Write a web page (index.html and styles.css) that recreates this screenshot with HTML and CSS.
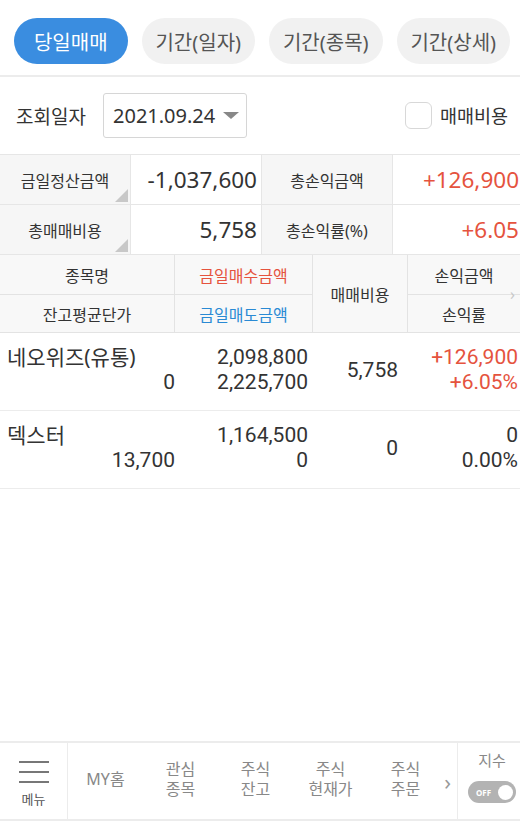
FILE: index.html
```html
<!DOCTYPE html>
<html lang="ko">
<head>
<meta charset="utf-8">
<link rel="stylesheet" href="styles.css">
</head>
<body>
<div class="page">
  <div class="tabs">
    <div class="tab active">당일매매</div>
    <div class="tab">기간(일자)</div>
    <div class="tab">기간(종목)</div>
    <div class="tab">기간(상세)</div>
  </div>

  <div class="query">
    <span class="q-label">조회일자</span>
    <div class="select"><span>2021.09.24</span><span class="caret"></span></div>
    <div class="check"><span class="box"></span><span>매매비용</span></div>
  </div>

  <div class="summary">
    <div class="s-label tri">금일정산금액</div>
    <div class="s-val">-1,037,600</div>
    <div class="s-label">총손익금액</div>
    <div class="s-val red">+126,900</div>
    <div class="s-label tri">총매매비용</div>
    <div class="s-val">5,758</div>
    <div class="s-label">총손익률(%)</div>
    <div class="s-val red">+6.05</div>
  </div>

  <div class="head">
    <div class="h c1 r1">종목명</div>
    <div class="h c2 r1 red">금일매수금액</div>
    <div class="h c3 span">매매비용</div>
    <div class="h c4 r1">손익금액</div>
    <div class="h c1 r2">잔고평균단가</div>
    <div class="h c2 r2 blue">금일매도금액</div>
    <div class="h c4 r2">손익률</div>
    <span class="more">›</span>
  </div>

  <div class="row">
    <div class="cell left"><div class="name">네오위즈(유통)</div><div class="num">0</div></div>
    <div class="cell"><div class="num">2,098,800</div><div class="num">2,225,700</div></div>
    <div class="cell mid"><div class="num">5,758</div></div>
    <div class="cell red"><div class="num">+126,900</div><div class="num">+6.05%</div></div>
  </div>
  <div class="row">
    <div class="cell left"><div class="name">덱스터</div><div class="num">13,700</div></div>
    <div class="cell"><div class="num">1,164,500</div><div class="num">0</div></div>
    <div class="cell mid"><div class="num">0</div></div>
    <div class="cell"><div class="num">0</div><div class="num">0.00%</div></div>
  </div>

  <nav class="nav">
    <div class="menu">
      <span class="bar"></span><span class="bar"></span><span class="bar"></span>
      <span class="menu-t">메뉴</span>
    </div>
    <div class="items">
      <div class="item">MY홈</div>
      <div class="item">관심<br>종목</div>
      <div class="item">주식<br>잔고</div>
      <div class="item">주식<br>현재가</div>
      <div class="item">주식<br>주문</div>
      <span class="chev">›</span>
    </div>
    <div class="index">
      <span class="idx-t">지수</span>
      <span class="toggle"><span class="off">OFF</span><span class="knob"></span></span>
    </div>
  </nav>
</div>
</body>
</html>
```

FILE: styles.css
```css
* { box-sizing: border-box; }
html, body { margin: 0; padding: 0; background: #fff; }
body {
  font-family: "Noto Sans", "Noto Sans CJK KR", sans-serif;
  color: #333;
}
.page {
  width: 520px;
  height: 823px;
  display: flex;
  flex-direction: column;
}
.tabs {
  display: flex;
  gap: 14px;
  padding: 18px 10px 11px 14px;
  border-bottom: 2px solid #ececec;
}
.tab {
  width: 114px;
  height: 46px;
  border-radius: 23px;
  background: #f1f1f1;
  color: #555;
  font-size: 20px;
  display: flex;
  align-items: center;
  justify-content: center;
}
.tab.active { background: #3a8de0; color: #fff; }

.query {
  height: 78px;
  display: flex;
  align-items: center;
  padding: 0 12px 0 16px;
  border-bottom: 1px solid #e6e6e6;
}
.q-label { font-size: 19px; width: 87px; color: #333; }
.select {
  width: 144px;
  height: 45px;
  border: 1px solid #d6d6d6;
  border-radius: 3px;
  display: flex;
  align-items: center;
  padding-left: 9px;
  font-size: 20px;
  color: #333;
  margin-top: -1px;
}
.caret {
  margin-left: 8px;
  width: 0; height: 0;
  border-left: 8px solid transparent;
  border-right: 8px solid transparent;
  border-top: 7px solid #888;
}
.check {
  margin-left: auto;
  display: flex;
  align-items: center;
  gap: 8px;
  font-size: 18.5px;
  color: #333;
  margin-top: -1px;
}
.box {
  width: 27px; height: 27px;
  border: 1.5px solid #d8d8d8;
  border-radius: 6px;
}

.summary {
  display: grid;
  grid-template-columns: 131px 131px 131px 127px;
  grid-auto-rows: 50px;
}
.summary > div {
  border-bottom: 1px solid #e6e6e6;
  border-right: 1px solid #e6e6e6;
  display: flex;
  align-items: center;
}
.summary > div:nth-child(4n) { border-right: none; }
.s-label {
  background: #f6f6f6;
  justify-content: center;
  font-size: 16px;
  color: #333;
  position: relative;
}
.s-label.tri::after {
  content: "";
  position: absolute;
  right: 2px; bottom: 2px;
  border-left: 13px solid transparent;
  border-bottom: 13px solid #c8c8c8;
}
.s-val {
  justify-content: flex-end;
  padding-right: 4px;
  font-size: 22.5px;
  color: #333;
}
.s-val.red { padding-right: 1px; }
.red { color: #e5533e !important; }
.blue { color: #2a8ad4 !important; }

.head {
  display: grid;
  grid-template-columns: 175px 138px 95px 112px;
  grid-template-rows: 40px 37px;
  background: #f8f8f8;
  border-bottom: 1px solid #e3e3e3;
  position: relative;
}
.h {
  display: flex;
  align-items: center;
  justify-content: center;
  font-size: 16px;
  color: #333;
  border-right: 1px solid #e3e3e3;
}
.h.r1 { grid-row: 1; border-bottom: 1px solid #e3e3e3; }
.h.r2 { grid-row: 2; }
.c1 { grid-column: 1; }
.c2 { grid-column: 2; }
.c3 { grid-column: 3; }
.c4 { grid-column: 4; border-right: none; }
.h.span { grid-row: 1 / 3; }
.more {
  position: absolute;
  right: 5px;
  top: 31px;
  font-size: 16px;
  color: #c8c8c8;
  line-height: 16px;
}

.row {
  display: grid;
  grid-template-columns: 175px 133px 95px 117px;
  height: 78px;
  border-bottom: 1px solid #ececec;
}
.cell {
  display: flex;
  flex-direction: column;
  align-items: flex-end;
  padding-top: 12px;
  font-family: Roboto, "Noto Sans CJK KR", sans-serif;
  font-size: 21px;
  line-height: 25px;
  color: #333;
}
.cell.left { align-items: stretch; padding-left: 7px; }
.cell.left .num { text-align: right; }
.cell.mid { justify-content: center; padding-top: 0; padding-right: 5px; padding-bottom: 2px; }
.cell:last-child { padding-right: 2px; }
.name { font-family: "Noto Sans", "Noto Sans CJK KR", sans-serif; font-size: 21px; }

.nav {
  margin-top: auto;
  margin-bottom: 2px;
  height: 80px;
  border-top: 2px solid #ececec;
  border-bottom: 2px solid #ececec;
  display: flex;
}
.menu {
  width: 68px;
  border-right: 1px solid #ececec;
  display: flex;
  flex-direction: column;
  align-items: center;
  padding-top: 18px;
}
.bar {
  width: 30px;
  height: 2px;
  background: #777;
  margin-bottom: 8px;
}
.menu-t { font-size: 13px; color: #555; line-height: 16px; }
.items {
  width: 390px;
  display: flex;
  position: relative;
  border-right: 1px solid #ececec;
}
.item {
  width: 75px;
  display: flex;
  align-items: center;
  justify-content: center;
  text-align: center;
  font-size: 16px;
  line-height: 20px;
  color: #888;
  padding-bottom: 4px;
}
.chev {
  position: absolute;
  right: 6px;
  top: 23px;
  font-size: 22px;
  color: #999;
}
.index {
  flex: 1;
  display: flex;
  flex-direction: column;
  align-items: center;
  padding: 7px 0 0 6px;
  gap: 11px;
}
.idx-t { font-size: 15px; color: #888; line-height: 20px; }
.toggle {
  width: 48px;
  height: 22px;
  border-radius: 11px;
  background: #b3b3b3;
  display: flex;
  align-items: center;
  justify-content: space-between;
  padding: 0 3px 0 8px;
}
.off { font-size: 8px; color: #fff; font-weight: bold; }
.knob { width: 15px; height: 15px; border-radius: 50%; background: #fff; }
```
